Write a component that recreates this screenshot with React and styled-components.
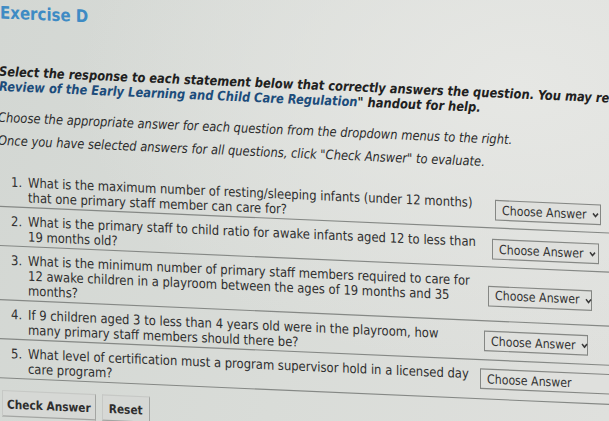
import React from "react";
import styled, { createGlobalStyle } from "styled-components";

const Global = createGlobalStyle`
  html, body { margin: 0; padding: 0; }
  body {
    width: 609px; height: 421px; overflow: hidden;
    background:
      radial-gradient(ellipse at 85% 20%, #e6e7e4 0%, rgba(230,231,228,0) 60%),
      linear-gradient(100deg, #d3d7d3 0%, #d9dcd8 50%, #dfe0dd 100%);
    font-family: "DejaVu Sans", Verdana, sans-serif;
    color: #2e2e2e;
  }
`;

/* The reference is a photo of a screen: the whole sheet is slightly sheared and stretched. */
const Page = styled.div`
  width: 640px;
  display: flex;
  flex-direction: column;
  transform-origin: 0 0;
  transform: skewY(2.5deg) scaleY(1.15);
`;

const Title = styled.h1`
  margin: 2px 0 0 0;
  font-size: 15px;
  font-weight: bold;
  color: #3e8bc4;
  line-height: 18px;
`;

const Intro = styled.p`
  margin: 36px 0 0 -1px;
  font-size: 11.5px;
  font-weight: bold;
  font-style: italic;
  line-height: 13px;
  white-space: nowrap;
  color: #202020;
`;

const Blue = styled.span`
  color: #1c4c7b;
`;

const Note = styled.p`
  margin: ${(p) => p.$top}px 0 0 -2px;
  font-size: 11.5px;
  font-style: italic;
  line-height: 14px;
  white-space: nowrap;
  color: #2b2b2b;
`;

const List = styled.ol`
  margin: 17px 0 0 0;
  padding: 0;
  width: 620px;
  list-style: none;
  display: flex;
  flex-direction: column;
`;

const Row = styled.li`
  display: grid;
  grid-template-columns: 17px 449px 1fr;
  align-items: start;
  padding: 6px 0 1px 11px;
  border-bottom: 1px solid #858885;
  font-size: 11.6px;
  line-height: 13px;
  color: #2f2f2f;
  white-space: nowrap;
`;

const Num = styled.span``;

const QText = styled.span``;

const Select = styled.div`
  align-self: center;
  margin-left: ${(p) => p.$ml}px;
  margin-bottom: ${(p) => p.$up * 2}px;
  width: ${(p) => p.$w}px;
  height: 18px;
  box-sizing: border-box;
  border: 1px solid #858784;
  background: #dfe0dd;
  display: flex;
  align-items: center;
  gap: 5px;
  padding: 0 0 0 6px;
  font-size: 11px;
  color: #343434;
  white-space: nowrap;
`;

const Chevron = styled.svg`
  width: 7px;
  height: 5px;
  flex: none;
  margin-top: 1px;
`;

const Buttons = styled.div`
  display: flex;
  gap: 6px;
  margin: 10px 0 0 2px;
`;

const Button = styled.button`
  font-family: "DejaVu Sans", Verdana, sans-serif;
  font-size: 10.6px;
  font-weight: bold;
  color: #2e2e2e;
  background: #d6d8d5;
  border: 1px solid #c6c8c5;
  border-right-color: #a3a5a2;
  border-bottom-color: #a3a5a2;
  padding: 0 ${(p) => p.$px}px;
  height: 23px;
`;

const questions = [
  {
    n: "1.",
    lines: [
      "What is the maximum number of resting/sleeping infants (under 12 months)",
      "that one primary staff member can care for?",
    ],
    ml: 18, up: 1, w: 106, chev: true,
  },
  {
    n: "2.",
    lines: [
      "What is the primary staff to child ratio for awake infants aged 12 to less than",
      "19 months old?",
    ],
    ml: 15, up: 1, w: 107, chev: true,
  },
  {
    n: "3.",
    lines: [
      "What is the minimum number of primary staff members required to care for",
      "12 awake children in a playroom between the ages of 19 months and 35",
      "months?",
    ],
    ml: 11, up: 1, w: 104, chev: true,
  },
  {
    n: "4.",
    lines: [
      "If 9 children aged 3 to less than 4 years old were in the playroom, how",
      "many primary staff members should there be?",
    ],
    ml: 7, up: 2, w: 104, chev: true,
  },
  {
    n: "5.",
    lines: [
      "What level of certification must a program supervisor hold in a licensed day",
      "care program?",
    ],
    ml: 3, up: 3, w: 150, chev: false,
  },
];

function Dropdown({ ml, up, w, chev }) {
  return (
    <Select $ml={ml} $up={up} $w={w}>
      Choose Answer
      {chev && (
        <Chevron viewBox="0 0 7 5">
          <path d="M1 1 L3.5 3.7 L6 1" fill="none" stroke="#3a3a3a" strokeWidth="1.5" />
        </Chevron>
      )}
    </Select>
  );
}

export default function App() {
  return (
    <>
      <Global />
      <Page>
        <Title>Exercise D</Title>
        <Intro>
          Select the response to each statement below that correctly answers the question. You may refer to the
          <br />
          <Blue>Review of the Early Learning and Child Care Regulation</Blue>" handout for help.
        </Intro>
        <Note $top={13}>Choose the appropriate answer for each question from the dropdown menus to the right.</Note>
        <Note $top={6}>Once you have selected answers for all questions, click "Check Answer" to evaluate.</Note>
        <List>
          {questions.map((q) => (
            <Row key={q.n}>
              <Num>{q.n}</Num>
              <QText>
                {q.lines.map((l, i) => (
                  <React.Fragment key={i}>
                    {i > 0 && <br />}
                    {l}
                  </React.Fragment>
                ))}
              </QText>
              <Dropdown ml={q.ml} up={q.up} w={q.w} chev={q.chev} />
            </Row>
          ))}
        </List>
        <Buttons>
          <Button $px={4}>Check Answer</Button>
          <Button $px={6}>Reset</Button>
        </Buttons>
      </Page>
    </>
  );
}
